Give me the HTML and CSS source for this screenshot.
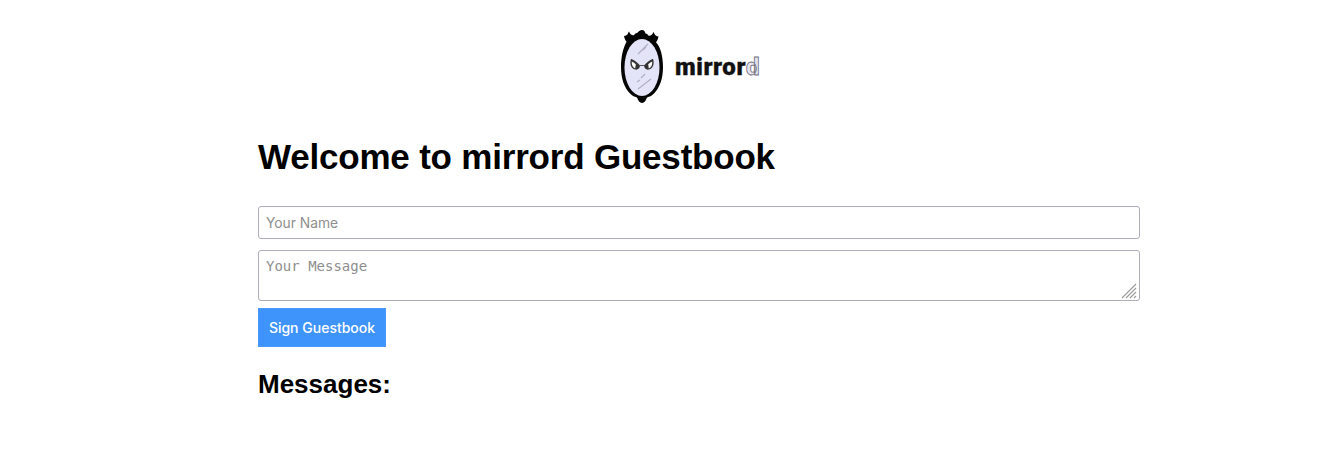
FILE: index.html
```html
<!DOCTYPE html>
<html lang="en">
<head>
<meta charset="utf-8">
<title>mirrord Guestbook</title>
<link rel="stylesheet" href="styles.css">
</head>
<body>
<main class="page">
  <header class="brand">
    <svg class="mirror" viewBox="0 0 44 76" width="44" height="76" aria-hidden="true">
      <path d="M22 1c2 0 3 1.500 3.500 3.500 1.500.3 2.500 1 3 2.200 2.500.3 4-1.200 5-3.700.4 0 .6 1 1 2 .8 1.500 2 2.300 4 2.500-.5 2.500-1.200 4-2.500 5.700C40.500 18 43 27 43 38c0 12-3.500 21-9 26.500-1.500 1.500-3 2.500-5 3.300-1 .3-2 .7-2.500 1.700-.7 2-2 4.500-4.500 4.500s-3.800-2.500-4.500-4.500c-.5-1-1.500-1.400-2.500-1.700-2-.8-3.500-1.800-5-3.300C4.500 59 1 50 1 38 1 27 3.500 18 6.500 12.700 5.200 11 4.500 9.500 4 7c2-.2 3.200-1 4-2.500.4-1 .6-2 1-2 1 2.500 2.500 4 5 3.700.5-1.200 1.500-1.900 3-2.200C18.500 2.500 20 1 22 1z" fill="#050505"/>
      <ellipse cx="22" cy="38.500" rx="17.500" ry="28.500" fill="#e4e4f9"/>
      <path d="M11.500 30c3.500 1.500 6 3.500 8.500 6.500l-.5 2c-1 1.800-2.800 2.500-4.500 2-2.800-.8-4.500-3-4.600-6-.1-1.700 0-3.200.6-4.500z" fill="#333"/>
      <path d="M32.500 30c-3.500 1.500-6 3.500-8.500 6.500l.5 2c1 1.800 2.800 2.500 4.500 2 2.800-.8 4.500-3 4.600-6 .1-1.700 0-3.200-.6-4.500z" fill="#333"/>
      <path d="M11.800 32.500c1.500.7 2.900 1.600 4 2.800l-.6 4.200c-2.200-.8-3.800-3.600-3.400-7z" fill="#fff"/>
      <path d="M32.200 32.500c-1.500.7-2.900 1.600-4 2.800l.6 4.200c2.200-.8 3.800-3.600 3.400-7z" fill="#fff"/>
      <path d="M20 36.500l4 0" stroke="#555" stroke-width="1" fill="none"/>
      <path d="M18 25l10-10M23 21l3-3M18 60l13-10M21 49l4-4M17 53l3-2" stroke="#b0b0c0" stroke-width="1.200" fill="none"/>
    </svg>
    <span class="wordmark">mirror<span class="wordmark-end">d</span></span>
  </header>
  <h1 class="title">Welcome to mirrord Guestbook</h1>
  <form class="form">
    <input class="field field-name" type="text" placeholder="Your Name">
    <div class="message-wrap">
      <textarea class="field field-message" placeholder="Your Message"></textarea>
      <svg class="grip" viewBox="0 0 16 16" width="16" height="16" aria-hidden="true">
        <path d="M1 15L15 1M5 15L15 5M9 15l6-6M13 15l2-2" stroke="#9a9a9a" stroke-width="1.100" fill="none"/>
      </svg>
    </div>
    <button class="submit" type="button">Sign Guestbook</button>
  </form>
  <h2 class="subtitle">Messages:</h2>
</main>
</body>
</html>
```
FILE: styles.css
```css
html, body {
  margin: 0;
  background: #fff;
}
.page {
  width: 882px;
  margin-left: 258px;
  padding-top: 29px;
  font-family: "Liberation Sans", Arial, sans-serif;
  color: #000;
}
.brand {
  display: flex;
  align-items: center;
  justify-content: center;
  gap: 11px;
  height: 76px;
  padding-right: 18px;
}
.mirror {
  display: block;
}
.wordmark {
  font-family: "Roboto", sans-serif;
  font-weight: 900;
  font-size: 24px;
  letter-spacing: 0.6px;
  color: #111;
  -webkit-text-stroke: 0.3px #111;
}
.wordmark-end {
  color: #e4e4f0;
  -webkit-text-stroke: 0.8px #6e6e78;
}
.title {
  margin: 31px 0 0;
  font-size: 35px;
  line-height: 42px;
  font-weight: 700;
  letter-spacing: -0.2px;
}
.form {
  display: flex;
  flex-direction: column;
  align-items: flex-start;
  margin-top: 28px;
}
.field {
  box-sizing: border-box;
  display: block;
  width: 100%;
  margin: 0;
  border: 1px solid #adadbc;
  border-radius: 3px;
  padding: 0 7px;
  background: #fff;
  outline: none;
}
.field::placeholder {
  color: #8e8e8e;
  opacity: 1;
}
.field-name {
  height: 33px;
  font-family: "Inter", sans-serif;
  font-size: 13.8px;
}
.message-wrap {
  position: relative;
  width: 100%;
  margin-top: 11px;
}
.field-message {
  height: 51px;
  padding-top: 7px;
  resize: none;
  font-family: "DejaVu Sans Mono", monospace;
  font-size: 14px;
  line-height: 16px;
}
.grip {
  position: absolute;
  right: 3px;
  bottom: 2px;
}
.submit {
  width: 128px;
  height: 39px;
  margin-top: 7px;
  border: 1px solid #4a98fb;
  border-radius: 0;
  padding: 0;
  background: #3f94fb;
  color: #fff;
  font-family: "Inter", sans-serif;
  font-size: 14px;
  font-weight: 500;
}
.subtitle {
  margin: 22px 0 0;
  font-size: 26px;
  line-height: 30px;
  font-weight: 700;
}
```
